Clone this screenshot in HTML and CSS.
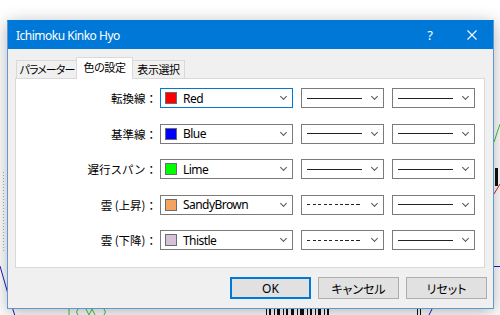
FILE: index.html
```html
<!DOCTYPE html>
<html lang="ja">
  <head>
    <meta charset="UTF-8" />
    <meta name="viewport" content="width=device-width, initial-scale=1.0" />
    <title>Ichimoku Kinko Hyo</title>
    <link rel="stylesheet" href="styles.css">
  </head>
  <body>
    <svg class="chart" width="500" height="315" viewBox="0 0 500 315">
      <line x1="3.5" y1="172" x2="3.5" y2="252" stroke="#b0b0b0" stroke-dasharray="1 2" />
      <polyline points="0,266 8,294 15,316" fill="none" stroke="#1c1cb8" />
      <path d="M69 309v6 M78 309q-3 3 0 6 M86 309l3 6 3-6 3 6 M104 309q3 3 0 6" fill="none" stroke="#33cc33" />
      <g fill="#111">
        <rect x="266" y="309" width="1" height="6" />
        <rect x="269" y="309" width="2" height="6" />
        <rect x="274" y="309" width="1" height="6" />
        <rect x="277" y="309" width="3" height="6" />
        <rect x="283" y="309" width="1" height="6" />
        <rect x="286" y="309" width="2" height="6" />
        <rect x="291" y="309" width="3" height="6" />
        <rect x="297" y="309" width="1" height="6" />
        <rect x="300" y="309" width="4" height="6" />
        <rect x="307" y="309" width="1" height="6" />
        <rect x="310" y="309" width="2" height="6" />
        <rect x="315" y="309" width="1" height="6" />
        <rect x="318" y="309" width="3" height="6" />
        <rect x="324" y="309" width="1" height="6" />
        <rect x="327" y="309" width="2" height="6" />
        <rect x="417" y="309" width="1" height="6" />
        <rect x="420" y="309" width="1" height="6" />
        <rect x="495" y="168" width="3" height="18" />
      </g>
      <line x1="429" y1="315" x2="432" y2="309" stroke="#1c1cb8" />
      <line x1="494" y1="142" x2="500" y2="124" stroke="#33cc33" />
      <line x1="494" y1="194" x2="500" y2="184" stroke="#e02020" />
      <line x1="493" y1="266.5" x2="500" y2="266.5" stroke="#1c1cb8" />
    </svg>

    <div class="dialog">
      <div class="titlebar">
        <span class="title">Ichimoku Kinko Hyo</span>
        <span class="caption-btn help">?</span>
        <span class="caption-btn close">
          <svg width="10" height="10" viewBox="0 0 10 10">
            <path d="M0.5 0.5L9.5 9.5M9.5 0.5L0.5 9.5" stroke="#fff" stroke-width="1.1" />
          </svg>
        </span>
      </div>

      <div class="body">
        <div class="tabs">
          <div class="tab params">パラメーター</div>
          <div class="tab active">色の設定</div>
          <div class="tab view">表示選択</div>
        </div>

        <div class="panel">
          <div class="rows">
            <div class="label">転換線：</div>
            <div class="combo color focused">
              <span class="swatch" style="background: #ff0000"></span>
              <span class="name">Red</span>
              <span class="chevron"></span>
            </div>
            <div class="combo">
              <span class="line solid"></span>
              <span class="chevron"></span>
            </div>
            <div class="combo">
              <span class="line solid"></span>
              <span class="chevron"></span>
            </div>

            <div class="label">基準線：</div>
            <div class="combo color">
              <span class="swatch" style="background: #0000ff"></span>
              <span class="name">Blue</span>
              <span class="chevron"></span>
            </div>
            <div class="combo">
              <span class="line solid"></span>
              <span class="chevron"></span>
            </div>
            <div class="combo">
              <span class="line solid"></span>
              <span class="chevron"></span>
            </div>

            <div class="label">遅行スパン：</div>
            <div class="combo color">
              <span class="swatch" style="background: #00ff00"></span>
              <span class="name">Lime</span>
              <span class="chevron"></span>
            </div>
            <div class="combo">
              <span class="line solid"></span>
              <span class="chevron"></span>
            </div>
            <div class="combo">
              <span class="line solid"></span>
              <span class="chevron"></span>
            </div>

            <div class="label">雲 (上昇)：</div>
            <div class="combo color">
              <span class="swatch" style="background: #f4a460"></span>
              <span class="name">SandyBrown</span>
              <span class="chevron"></span>
            </div>
            <div class="combo">
              <span class="line dashed"></span>
              <span class="chevron"></span>
            </div>
            <div class="combo">
              <span class="line solid"></span>
              <span class="chevron"></span>
            </div>

            <div class="label">雲 (下降)：</div>
            <div class="combo color">
              <span class="swatch" style="background: #d8bfd8"></span>
              <span class="name">Thistle</span>
              <span class="chevron"></span>
            </div>
            <div class="combo">
              <span class="line dashed"></span>
              <span class="chevron"></span>
            </div>
            <div class="combo">
              <span class="line solid"></span>
              <span class="chevron"></span>
            </div>
          </div>
        </div>

        <div class="buttons">
          <button class="btn default">OK</button>
          <button class="btn">キャンセル</button>
          <button class="btn">リセット</button>
        </div>
      </div>
    </div>
  </body>
</html>
```

FILE: styles.css
```css
* {
  box-sizing: border-box;
}

body {
  margin: 0;
  width: 500px;
  height: 315px;
  padding: 20px 0 0 7px;
  overflow: hidden;
  position: relative;
  background: #ffffff;
  font-family: "Noto Sans CJK JP", sans-serif;
  font-size: 12px;
  color: #000;
}

.chart {
  position: absolute;
  left: 0;
  top: 0;
}

.dialog {
  position: relative;
  width: 487px;
  height: 289px;
  border: 1px solid #5f97d3;
  border-top-color: #0078d7;
  background: #f0f0f0;
  box-shadow: 0 3px 16px rgba(0, 0, 0, 0.3);
  display: flex;
  flex-direction: column;
}

.titlebar {
  height: 28px;
  background: #0078d7;
  color: #fff;
  display: flex;
  align-items: center;
  padding-left: 8px;
}

.title {
  flex: 1;
  font-family: "Noto Sans", sans-serif;
  font-size: 12px;
  letter-spacing: -0.5px;
}

.caption-btn {
  width: 42px;
  height: 28px;
  display: flex;
  align-items: center;
  justify-content: center;
}

.help {
  font-family: "Noto Sans", sans-serif;
  font-size: 13px;
}

.body {
  flex: 1;
  padding: 8px 8px 0 7px;
  display: flex;
  flex-direction: column;
}

.tabs {
  height: 21px;
  display: flex;
  align-items: flex-end;
  padding-left: 1px;
}

.tab {
  height: 18px;
  border: 1px solid #d9d9d9;
  border-bottom: none;
  background: #f0f0f0;
  line-height: 16px;
  font-size: 11px;
  letter-spacing: -0.4px;
  font-feature-settings: "palt";
  white-space: nowrap;
  text-align: center;
}

.tab.params {
  width: 62px;
  letter-spacing: -0.9px;
}

.tab.view {
  width: 54px;
  border-left: none;
  padding-left: 2px;
}

.tab.active {
  position: relative;
  z-index: 1;
  width: 57px;
  height: 22px;
  margin: 0 -2px -1px;
  background: #fff;
  line-height: 19px;
}

.panel {
  height: 190px;
  border: 1px solid #d9d9d9;
  background: #fff;
  padding-top: 9px;
}

.rows {
  display: grid;
  grid-template-columns: 136px 133px 83px 83px;
  grid-auto-rows: 20px;
  column-gap: 8px;
  row-gap: 15.5px;
}

.label {
  text-align: right;
  margin-right: -5px;
  line-height: 20px;
  font-size: 11.5px;
  white-space: nowrap;
}

.combo {
  position: relative;
  display: flex;
  align-items: center;
  border: 1px solid #7a7a7a;
  background: #fff;
  padding-left: 5px;
}

.combo.focused {
  border-color: #0078d7;
}

.combo.color {
  padding-left: 4px;
}

.swatch {
  width: 12px;
  height: 12px;
  border: 1px solid #6d6d6d;
}

.name {
  margin-left: 6px;
  font-family: "Noto Sans", sans-serif;
  font-size: 12px;
  letter-spacing: -0.55px;
}

.line {
  width: 55px;
  height: 1px;
}

.line.solid {
  background: #222;
}

.line.dashed {
  background: repeating-linear-gradient(to right, #222 0 3px, transparent 3px 5.5px);
}

.chevron {
  position: absolute;
  right: 5px;
  top: 7px;
  width: 7px;
  height: 4px;
}

.chevron::before {
  content: "";
  position: absolute;
  left: 1px;
  top: -2px;
  width: 4px;
  height: 4px;
  border-right: 1px solid #555;
  border-bottom: 1px solid #555;
  transform: rotate(45deg);
}

.buttons {
  display: flex;
  justify-content: flex-end;
  gap: 7px;
  margin: 9px -2px 0 0;
}

.btn {
  width: 81px;
  height: 22px;
  border: 1px solid #adadad;
  background: #e1e1e1;
  font-family: "Noto Sans CJK JP", sans-serif;
  font-size: 12px;
  font-feature-settings: "palt";
  color: #000;
  padding: 0;
}

.btn.default {
  border: 2px solid #0078d7;
  font-family: "Noto Sans", sans-serif;
}
```
